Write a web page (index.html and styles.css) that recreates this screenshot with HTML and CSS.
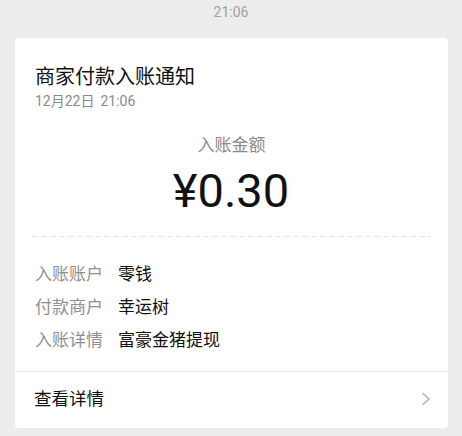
FILE: index.html
```html
<!DOCTYPE html>
<html lang="zh-CN">
<head>
<meta charset="utf-8">
<title>商家付款入账通知</title>
<link rel="stylesheet" href="styles.css">
</head>
<body>
<div class="time">21:06</div>
<div class="card">
  <div class="head">
    <div class="title">商家付款入账通知</div>
    <div class="date">12月22日<span class="gap"></span>21:06</div>
  </div>
  <div class="amount">
    <div class="amount-label">入账金额</div>
    <div class="amount-value">¥0.30</div>
  </div>
  <div class="dash"></div>
  <div class="rows">
    <div class="row"><span class="k">入账账户</span><span class="v">零钱</span></div>
    <div class="row"><span class="k">付款商户</span><span class="v">幸运树</span></div>
    <div class="row"><span class="k">入账详情</span><span class="v">富豪金猪提现</span></div>
  </div>
  <div class="foot">
    <span class="foot-text">查看详情</span>
    <svg class="chev" width="10" height="14" viewBox="0 0 10 14"><path d="M1.5 1.2 L8 7 L1.5 12.8" fill="none" stroke="#b8b8b8" stroke-width="1.6"/></svg>
  </div>
</div>
</body>
</html>
```
FILE: styles.css
```css
* { box-sizing: border-box; }
html, body { margin: 0; padding: 0; }
body {
  background: #ededed;
  font-family: Roboto, "Noto Sans CJK SC", sans-serif;
  width: 462px;
  height: 436px;
  overflow: hidden;
}
.time {
  height: 24px;
  line-height: 24px;
  text-align: center;
  font-size: 14px;
  color: #a0a0a0;
  margin-bottom: 14px;
}
.card {
  margin: 0 14px 0 15px;
  background: #fff;
  border-radius: 4px;
  height: 390px;
}
.head {
  padding: 25px 19px 0 20px;
}
.title {
  font-size: 20px;
  line-height: 28px;
  color: #111;
}
.date {
  font-size: 14px;
  line-height: 20px;
  color: #8a8a8a;
}
.gap {
  display: inline-block;
  width: 6px;
}
.amount {
  padding-top: 22px;
  text-align: center;
}
.amount-label {
  font-size: 17px;
  line-height: 24px;
  color: #8a8a8a;
}
.amount-value {
  font-size: 47px;
  line-height: 60px;
  color: #111;
  padding-top: 4px;
  padding-right: 1px;
}
.dash {
  margin: 15px 18px 0 17px;
  height: 1px;
  background-image: linear-gradient(to right, #e4e4e4 0 6px, transparent 6px 9px);
  background-size: 9px 1px;
}
.rows {
  padding: 21px 20px 14px 20px;
}
.row {
  display: flex;
  font-size: 17px;
  line-height: 33px;
}
.k {
  width: 83px;
  color: #8f8f8f;
}
.v {
  color: #111;
}
.foot {
  border-top: 1px solid #ececec;
  height: 56px;
  display: flex;
  align-items: center;
  justify-content: space-between;
  padding: 0 17px 0 19px;
}
.foot-text {
  font-size: 17.5px;
  color: #111;
  margin-top: -4px;
}
.chev { margin-top: -1px; }
```
